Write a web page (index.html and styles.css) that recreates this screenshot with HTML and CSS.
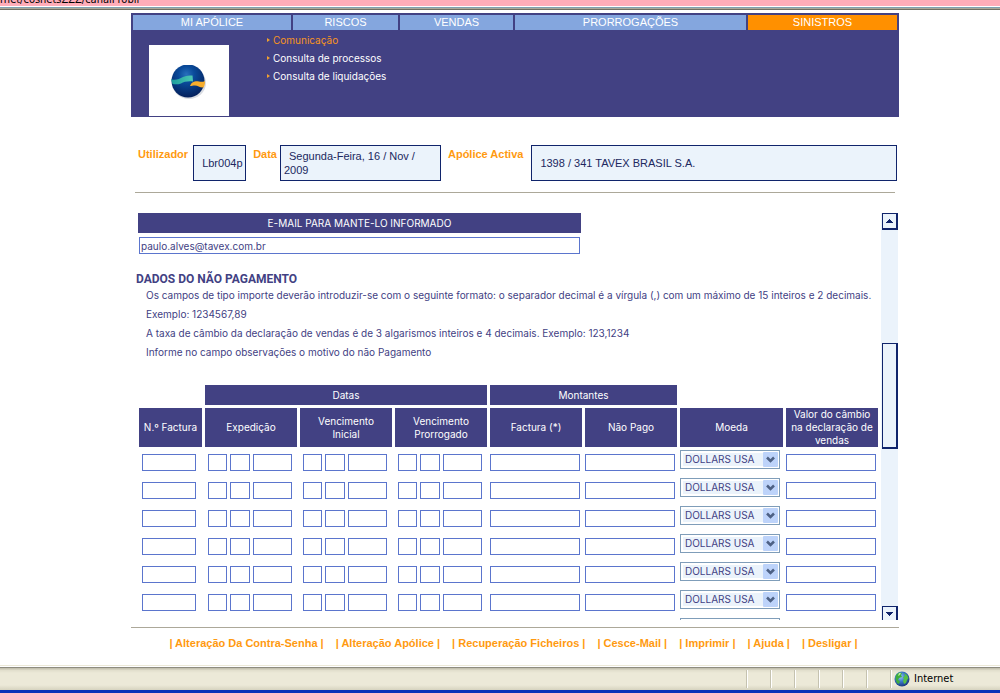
FILE: index.html
```html
<!DOCTYPE html>
<html lang="pt">
<head>
<meta charset="utf-8">
<title>Sinistros - Comunicação</title>
<link rel="stylesheet" href="styles.css">
</head>
<body>
<div class="address"><span>rnet/cosnetsZZZ/canalProbli</span></div>
<div class="chrome-edge"></div>
<div class="page">
  <header class="banner">
    <nav class="tabs" aria-label="Principal">
      <a href="#">MI APÓLICE</a>
      <a href="#">RISCOS</a>
      <a href="#">VENDAS</a>
      <a href="#">PRORROGAÇÕES</a>
      <a href="#" class="active">SINISTROS</a>
    </nav>
    <div class="banner-body">
      <div class="logo">
        <svg width="36" height="36" viewBox="0 0 36 36" aria-hidden="true">
          <defs>
            <radialGradient id="ball" cx="45%" cy="30%" r="70%">
              <stop offset="0" stop-color="#2870bc"/><stop offset=".35" stop-color="#094a9a"/><stop offset="1" stop-color="#04205c"/>
            </radialGradient>
            <linearGradient id="teal"><stop offset="0" stop-color="#1c9c9c"/><stop offset="1" stop-color="#4cc8b4"/></linearGradient>
          </defs>
          <ellipse cx="18" cy="18" rx="17" ry="16" fill="#d9dce2"/>
          <circle cx="17" cy="16" r="16.500" fill="url(#ball)"/>
          <path d="M0 14C4 16 8 14 12 12C15 10.500 18 10.500 21.500 10.500L22 16.500C16 16 13 17 10 18.500C7 19.500 4 19.500 1.500 19Z" fill="url(#teal)"/>
          <path d="M19 21C21 16 25 16 28 16.500C30 17 32 17 34 16C34 19 33.500 21 32.500 22.500C29 23 27 20.500 24 20.500C22 20.500 20.500 21 19 21Z" fill="#f8ae2c"/>
        </svg>
      </div>
      <ul class="submenu">
        <li class="current"><a href="#">Comunicação</a></li>
        <li><a href="#">Consulta de processos</a></li>
        <li><a href="#">Consulta de liquidações</a></li>
      </ul>
    </div>
  </header>

  <section class="session">
    <span class="session-label">Utilizador</span>
    <div class="session-box user">Lbr004p</div>
    <span class="session-label">Data</span>
    <div class="session-box date">Segunda-Feira, 16 / Nov / 2009</div>
    <span class="session-label">Apólice Activa</span>
    <div class="session-box policy">1398 / 341 TAVEX BRASIL S.A.</div>
  </section>

  <main class="viewport">
    <div class="content">
      <div class="mail">
        <label for="mail">E-MAIL PARA MANTE-LO INFORMADO</label>
        <input id="mail" type="text" value="paulo.alves@tavex.com.br">
      </div>
      <h1>DADOS DO NÃO PAGAMENTO</h1>
      <div class="notes">
        <p>Os campos de tipo importe deverão introduzir-se com o seguinte formato: o separador decimal é a vírgula (,) com um máximo de 15 inteiros e 2 decimais.</p>
        <p>Exemplo: 1234567,89</p>
        <p>A taxa de câmbio da declaração de vendas é de 3 algarismos inteiros e 4 decimais. Exemplo: 123,1234</p>
        <p>Informe no campo observações o motivo do não Pagamento</p>
      </div>
      <table class="invoices">
        <colgroup><col class="c-num"><col class="c-std"><col class="c-std"><col class="c-std"><col class="c-std"><col class="c-std"><col class="c-cur"><col class="c-std"></colgroup>
        <thead>
          <tr class="groups"><td></td><th colspan="3">Datas</th><th colspan="2">Montantes</th><td colspan="2"></td></tr>
          <tr class="heads"><th>N.º Factura</th><th>Expedição</th><th>Vencimento<br>Inicial</th><th>Vencimento<br>Prorrogado</th><th>Factura (*)</th><th>Não Pago</th><th>Moeda</th><th>Valor do câmbio<br>na declaração de<br>vendas</th></tr>
        </thead>
        <tbody id="rows"></tbody>
      </table>
    </div>
    <div class="scrollbar">
      <button type="button" class="arrow" aria-label="Subir"><svg width="7" height="4" viewBox="0 0 7 4"><path d="M3 0h1v1h1v1h1v1h1v1H0V3h1V2h1V1h1z"/></svg></button>
      <div class="track"><div class="thumb"></div></div>
      <button type="button" class="arrow down" aria-label="Descer"><svg width="7" height="4" viewBox="0 0 7 4"><path d="M0 0h7v1H6v1H5v1H4v1H3V3H2V2H1V1H0z"/></svg></button>
    </div>
  </main>

  <footer class="links">
    <span>| <a href="#">Alteração Da Contra-Senha</a> |</span>
    <span>| <a href="#">Alteração Apólice</a> |</span>
    <span>| <a href="#">Recuperação Ficheiros</a> |</span>
    <span>| <a href="#">Cesce-Mail</a> |</span>
    <span>| <a href="#">Imprimir</a> |</span>
    <span>| <a href="#">Ajuda</a> |</span>
    <span>| <a href="#">Desligar</a> |</span>
  </footer>
</div>
<div class="statusbar">
  <i></i><i></i><i></i><i></i><i></i><i></i>
  <div class="zone">
    <svg width="16" height="16" viewBox="0 0 16 16" aria-hidden="true">
      <defs><radialGradient id="sea" cx="40%" cy="35%" r="65%"><stop offset="0" stop-color="#9cc8f4"/><stop offset=".5" stop-color="#3a78cc"/><stop offset="1" stop-color="#1c3c80"/></radialGradient></defs>
      <circle cx="8" cy="8" r="7.500" fill="url(#sea)"/>
      <path d="M2 4L5 1.500L8 2L7 4L8 6L5 7L4 9L6 10L5 13L3 12L1.500 8Z" fill="#3fae3c"/>
      <path d="M10 2L13 4L14.500 7L13 9L12 12L10 13L9 10L10 8L9 6L11 5Z" fill="#56c044"/>
      <path d="M5 2L7 2L6 4L4 5Z" fill="#b8ec9c"/>
    </svg>
    <span>Internet</span>
  </div>
</div>
<script src="app.js"></script>
</body>
</html>
```

FILE: styles.css
```css
* { box-sizing: border-box; }
body {
  margin: 0;
  height: 100vh;
  display: flex;
  flex-direction: column;
  overflow: hidden;
  background: #fff;
  color: #424183;
  font: 10px/13px Inter, "Liberation Sans", Arial, sans-serif;
}
a { color: inherit; text-decoration: none; }

.address {
  flex: none;
  height: 6px;
  overflow: hidden;
  background: #ffadb9;
  color: #000;
  display: flex;
  align-items: flex-end;
  font: 11px/13px "DejaVu Sans Condensed", "DejaVu Sans", sans-serif;
}
.chrome-edge {
  flex: none;
  height: 4px;
  margin-bottom: 3px;
  background: linear-gradient(#fff 0 1px, #7fa0b0 1px 2px, #aca899 2px 3px, #716f64 3px 4px);
}

.page {
  flex: 1;
  min-height: 0;
  margin: 0 101px 0 131px;
  display: flex;
  flex-direction: column;
}

.banner { background: #424183; flex: none; }
.tabs {
  display: grid;
  grid-template-columns: 158fr 105fr 113fr 231fr 149fr;
  gap: 2px;
  padding: 2px 2px 0;
}
.tabs a {
  background: #84a6de;
  color: #fff;
  text-align: center;
  font-family: "Liberation Sans", Arial, sans-serif;
  font-size: 11px;
  line-height: 15px;
}
.tabs .active { background: #ff9000; }
.banner-body { display: flex; padding: 0 18px; }
.logo {
  width: 80px;
  height: 71px;
  margin: 15px 0 1px;
  padding: 20px 0 0 22px;
  background: #fff;
}
.submenu {
  margin: 0;
  padding: 1px 0 0 38px;
  list-style: none;
  color: #fff;
  line-height: 18px;
}
.submenu li { display: flex; align-items: center; gap: 3px; }
.submenu li::before {
  content: "";
  border: 2px solid transparent;
  border-left: 3px solid #f0a030;
  border-right: 0;
}
.submenu .current { color: #f7941d; }

.session {
  flex: none;
  display: flex;
  margin: 28px 4px 0;
  padding: 0 0 11px 3px;
  border-bottom: 1px solid #aca899;
  font-family: "Liberation Sans", Arial, sans-serif;
  font-size: 11px;
}
.session-label {
  padding-top: 3px;
  color: #ff9a10;
  font-weight: bold;
  white-space: nowrap;
}
.session-box {
  height: 36px;
  border: 1px solid #10246b;
  background: #ebf3fb;
  color: #202860;
  line-height: 14px;
  display: flex;
  align-items: center;
}
.user { width: 53px; margin: 0 7px 0 5px; padding-left: 8px; }
.date { width: 161px; margin: 0 7px 0 3px; padding: 3px 20px 0 3px; display: block; text-indent: 5px; }
.policy { flex: 1; margin: 0 -2px 0 8px; padding-left: 8px; }

.viewport {
  flex: 1;
  min-height: 0;
  margin: 20px 1px 7px 0;
  display: flex;
}
.content { flex: 1; min-width: 0; overflow: hidden; padding-left: 5px; }
.mail { width: 60%; padding: 0 2px; display: flex; flex-direction: column; gap: 4px; }
.mail label {
  background: #424183;
  color: #fff;
  text-align: center;
  line-height: 20px;
}
input {
  display: block;
  width: 100%;
  min-width: 0;
  height: 17px;
  margin: 0;
  padding: 0 1px;
  border: 1px solid #5b75cd;
  border-radius: 0;
  background: #fff;
  color: #424183;
  font: inherit;
}
.mail input { margin: 0 1px; width: auto; }
h1 { margin: 18px 0 0; font: bold 12px/14px Roboto, "Liberation Sans", sans-serif; }
.notes { padding-left: 10px; }
.notes p { margin: 0; line-height: 19px; white-space: nowrap; }

.invoices {
  width: 100%;
  margin-top: 20px;
  table-layout: fixed;
  border-collapse: separate;
  border-spacing: 3px;
}
.c-num { width: 63px; }
.c-cur { width: 103px; }
.invoices th { padding: 0; background: #424183; color: #fff; font-weight: normal; }
.invoices td { padding: 0; }
.groups th { height: 20px; }
.heads th { height: 39px; }
.invoices tbody td { height: 25px; padding: 0 2px 0 0; vertical-align: middle; }
.invoices tbody td:first-child { padding: 0 6px 0 3px; }
.invoices tbody td.currency { vertical-align: top; padding: 0 3px 0 0; }
.triple { display: grid; grid-template-columns: 19px 20px 1fr; gap: 3px; padding: 0 3px; }
.pick { position: relative; display: block; }
.pick select {
  appearance: none;
  display: block;
  width: 100%;
  height: 19px;
  margin: 0;
  padding: 0 0 0 4px;
  border: 1px solid #7f9db9;
  border-radius: 0;
  box-shadow: inset 0 0 0 2px #fff;
  background: #ebf3fb;
  color: #424183;
  font: inherit;
}
.pick svg { position: absolute; right: 2px; top: 2px; pointer-events: none; }

.scrollbar {
  flex: none;
  width: 17px;
  display: flex;
  flex-direction: column;
  background: #ebf3fb;
  overflow: hidden;
}
.arrow {
  flex: none;
  width: 16px;
  height: 17px;
  margin-left: 1px;
  padding: 0 0 0 3px;
  border: solid #10246b;
  border-width: 1px 2px 2px 1px;
  background: #ebf3fb;
  fill: #10246b;
  display: flex;
  align-items: center;
}
.down { height: 14px; border-bottom: 0; }
.track { flex: 1; display: grid; grid-template-rows: 113fr 106fr 157fr; }
.thumb {
  grid-row: 2;
  margin-left: 1px;
  border: solid #10246b;
  border-width: 1px 2px 2px 1px;
}

.links {
  flex: none;
  height: 38px;
  border-top: 1px solid #aca899;
  padding: 9px 3px 0 0;
  display: flex;
  justify-content: center;
  gap: 12px;
  color: #ff9a10;
  font-family: "Liberation Sans", Arial, sans-serif;
  font-size: 11px;
  font-weight: bold;
}

.statusbar {
  flex: none;
  height: 28px;
  padding-top: 4px;
  border-bottom: 3px solid #0a30b8;
  background: linear-gradient(#ece9d8 0 1px, #fff 1px 2px, #8e8c80 2px 3px, #c5c2b0 3px 4px, #e0ddcb 5px, #ece9d8 8px, #ece9d8 20px, #d6d3bf 25px);
  display: flex;
  justify-content: flex-end;
}
.statusbar i {
  width: 24px;
  height: 18px;
  margin-top: 1px;
  border-left: 1px solid #c5c2b0;
  box-shadow: inset 1px 0 #fff;
}
.zone {
  width: 110px;
  height: 18px;
  margin-top: 1px;
  padding-left: 3px;
  border-left: 1px solid #c5c2b0;
  box-shadow: inset 1px 0 #fff;
  display: flex;
  align-items: center;
  gap: 4px;
  color: #000;
  font: 11px/14px "DejaVu Sans Condensed", "DejaVu Sans", sans-serif;
}
```

FILE: app.js
```js
const field = (label) => `<input type="text" aria-label="${label}">`;
const date = (label) => `<td><div class="triple">${["dia", "mês", "ano"].map((p) => field(`${label}, ${p}`)).join("")}</div></td>`;
const currency = (label) => `<td class="currency"><span class="pick">
  <select aria-label="${label}"><option>DOLLARS USA</option></select>
  <svg width="15" height="15" viewBox="0 0 15 15" aria-hidden="true">
    <rect width="15" height="15" rx="1" fill="#bdd3fa"/>
    <path d="M4 5.500L7.500 9L11 5.500" fill="none" stroke="#4d6185" stroke-width="2.500"/>
  </svg></span></td>`;

const rows = document.getElementById("rows");
for (let n = 1; n <= 7; n++) {
  const row = document.createElement("tr");
  row.innerHTML =
    `<td>${field(`N.º Factura ${n}`)}</td>` +
    date(`Expedição ${n}`) +
    date(`Vencimento Inicial ${n}`) +
    date(`Vencimento Prorrogado ${n}`) +
    `<td>${field(`Factura ${n}`)}</td>` +
    `<td>${field(`Não Pago ${n}`)}</td>` +
    currency(`Moeda ${n}`) +
    `<td>${field(`Valor do câmbio ${n}`)}</td>`;
  rows.appendChild(row);
}
```
